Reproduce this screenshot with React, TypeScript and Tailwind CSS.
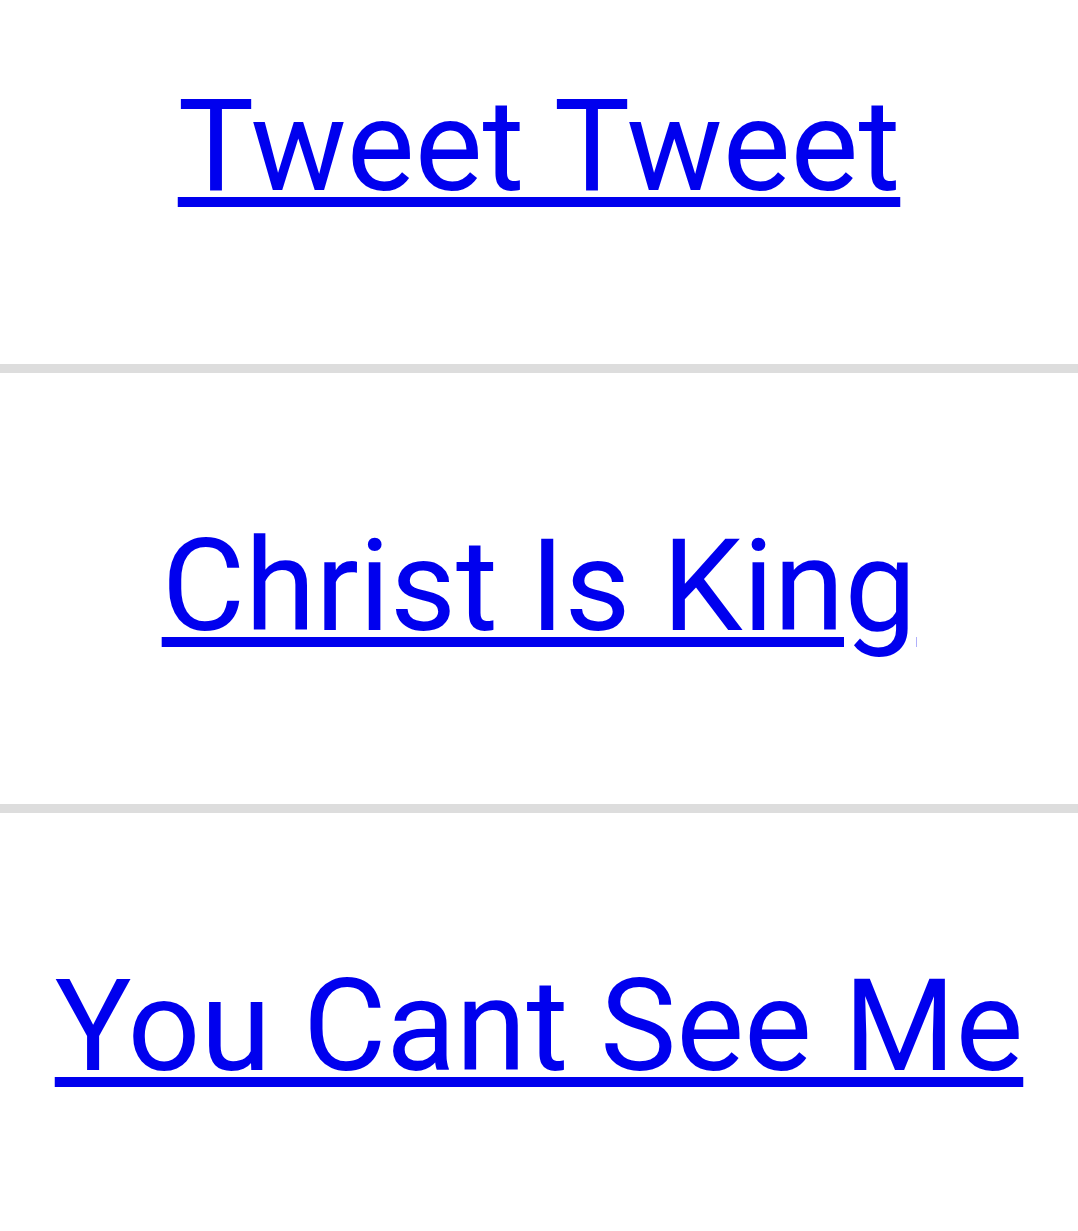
export default function App() {
  const links = ["Tweet Tweet", "Christ Is King", "You Cant See Me"];

  return (
    <div className="min-h-screen bg-white font-['Roboto',sans-serif]">
      {links.map((label, i) => (
        <div key={label}>
          {i > 0 && <div className="h-[9px] bg-[#dddddd]" />}
          <div
            className={
              i === 0
                ? "pt-[82px] pb-[154px] text-center"
                : "pt-[149px] pb-[154px] text-center"
            }
          >
            <a
              href="#"
              className="text-[128px] leading-none text-[#0000ee] underline decoration-[10px] underline-offset-[7px]"
            >
              {label}
            </a>
          </div>
        </div>
      ))}
    </div>
  );
}
